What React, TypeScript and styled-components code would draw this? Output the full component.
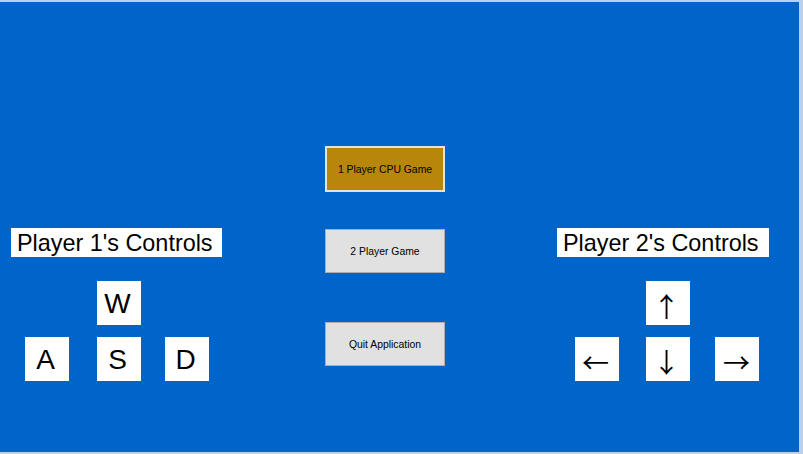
import React from "react";
import styled, { createGlobalStyle } from "styled-components";

const Global = createGlobalStyle`
  html, body { margin: 0; padding: 0; }
  body { background: #b9d1ea; font-family: "Liberation Sans", Arial, sans-serif; }
`;

const Frame = styled.div`
  width: 803px;
  height: 454px;
  box-sizing: border-box;
  padding: 2px 4px 2px 0;
  background: #b9d1ea;
`;

const Client = styled.div`
  width: 799px;
  height: 450px;
  background: #0064c8;
  display: flex;
  align-items: flex-start;
`;

const Side = styled.div<{ $ml: number; $w: number }>`
  margin-left: ${(p) => p.$ml}px;
  width: ${(p) => p.$w}px;
  padding-top: 226px;
  display: flex;
  flex-direction: column;
`;

const Label = styled.div<{ $w: number }>`
  width: ${(p) => p.$w}px;
  height: 29px;
  background: #fff;
  color: #000;
  font-size: 23.4px;
  line-height: 31px;
  padding-left: 6px;
  box-sizing: border-box;
  white-space: nowrap;
  overflow: hidden;
`;

const Keys = styled.div<{ $ml: number; $cols: string }>`
  margin-left: ${(p) => p.$ml}px;
  margin-top: 24px;
  display: grid;
  grid-template-columns: ${(p) => p.$cols};
  grid-template-rows: 44px 44px;
  row-gap: 12px;
`;

const Key = styled.div<{ $col: number; $row: number }>`
  grid-column: ${(p) => p.$col};
  grid-row: ${(p) => p.$row};
  width: 44px;
  height: 44px;
  background: #fff;
  color: #000;
  font-size: 28px;
  line-height: 1;
  display: flex;
  align-items: center;
  justify-content: center;
  padding: 1px 3px 0 0;
  box-sizing: border-box;
`;

const Arrow = styled.span<{ $dx?: number; $dy?: number }>`
  font-family: "Noto Sans CJK JP", sans-serif;
  font-size: 27px;
  line-height: 1;
  position: relative;
  left: ${(p) => p.$dx ?? 0}px;
  top: ${(p) => p.$dy ?? 0}px;
`;

const Center = styled.div`
  margin-left: 103px;
  width: 120px;
  padding-top: 144px;
  display: flex;
  flex-direction: column;
`;

const Button = styled.div<{ $primary?: boolean; $mt: number; $h: number }>`
  margin-top: ${(p) => p.$mt}px;
  height: ${(p) => p.$h}px;
  box-sizing: border-box;
  background: ${(p) => (p.$primary ? "#b8860b" : "#e1e1e1")};
  border: ${(p) => (p.$primary ? "2px solid #e3e3e3" : "1px solid #adadad")};
  color: #000;
  font-size: 10.4px;
  display: flex;
  align-items: center;
  justify-content: center;
  white-space: nowrap;
`;

export default function App() {
  return (
    <>
      <Global />
      <Frame>
        <Client>
          <Side $ml={11} $w={211}>
            <Label $w={211}>Player 1's Controls</Label>
            <Keys $ml={14} $cols="72px 68px 44px">
              <Key $col={2} $row={1}>W</Key>
              <Key $col={1} $row={2}>A</Key>
              <Key $col={2} $row={2}>S</Key>
              <Key $col={3} $row={2}>D</Key>
            </Keys>
          </Side>
          <Center>
            <Button $primary $mt={0} $h={46}>1 Player CPU Game</Button>
            <Button $mt={37} $h={44}>2 Player Game</Button>
            <Button $mt={49} $h={44}>Quit Application</Button>
          </Center>
          <Side $ml={112} $w={212}>
            <Label $w={212}>Player 2's Controls</Label>
            <Keys $ml={18} $cols="71px 69px 44px">
              <Key $col={2} $row={1}><Arrow $dx={0} $dy={2}>↑</Arrow></Key>
              <Key $col={1} $row={2}><Arrow $dx={0} $dy={2}>←</Arrow></Key>
              <Key $col={2} $row={2}><Arrow $dx={0} $dy={2}>↓</Arrow></Key>
              <Key $col={3} $row={2}><Arrow $dx={1} $dy={2}>→</Arrow></Key>
            </Keys>
          </Side>
        </Client>
      </Frame>
    </>
  );
}
